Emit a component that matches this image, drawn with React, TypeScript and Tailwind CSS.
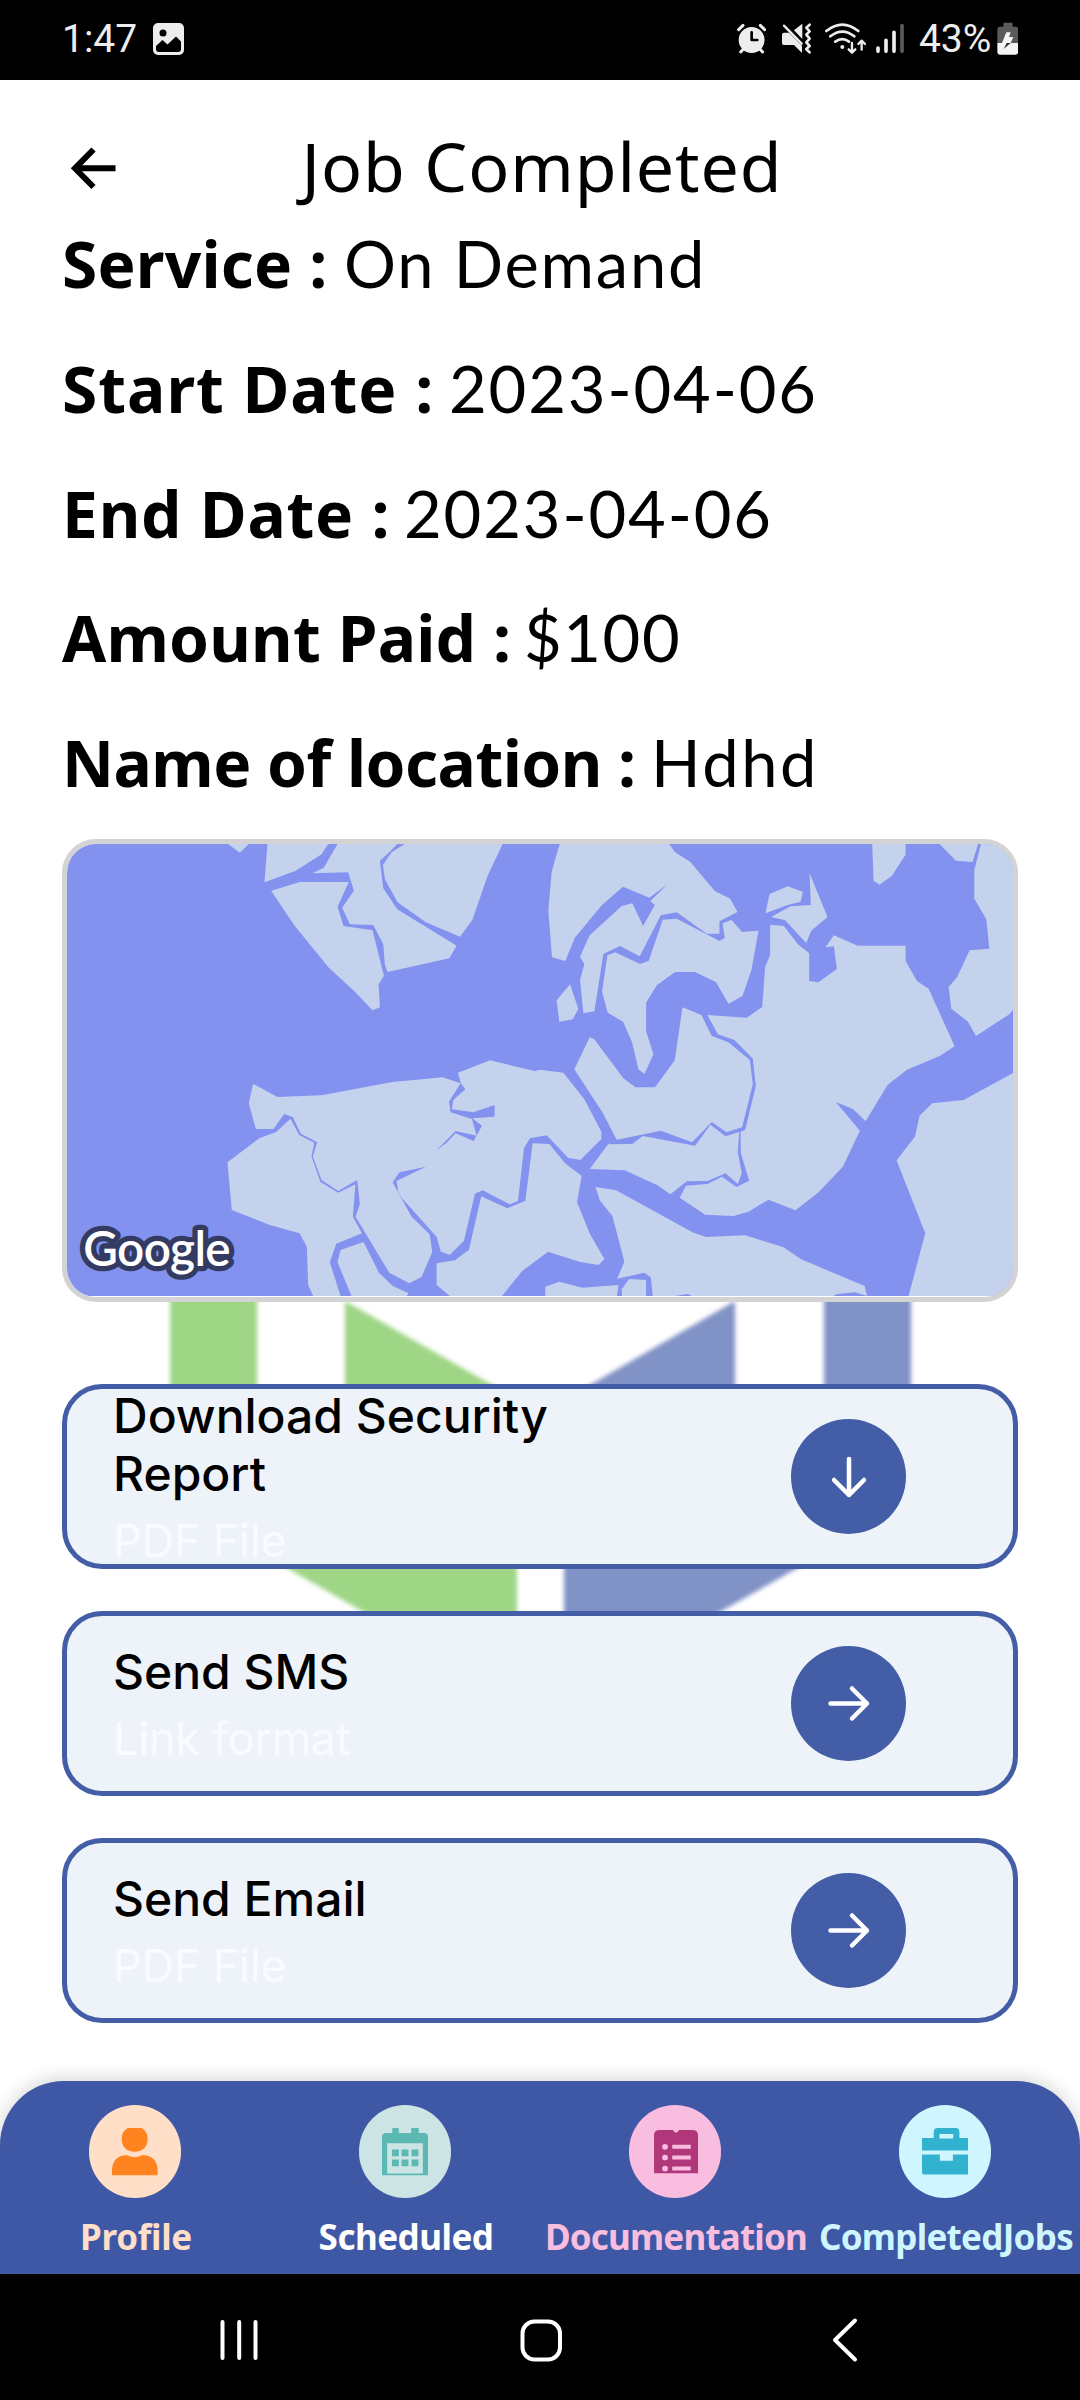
import type { ReactNode } from "react";

const details = [
  { label: "Service :", value: "On Demand", labelClass: "w-[282px] tracking-[0.2px]", valueClass: "tracking-[1.8px]" },
  { label: "Start Date :", value: "2023-04-06", labelClass: "w-[387px] tracking-[1px]", valueClass: "tracking-[1.9px]" },
  { label: "End Date :", value: "2023-04-06", labelClass: "w-[342px] tracking-[0.8px]", valueClass: "tracking-[1.9px]" },
  { label: "Amount Paid :", value: "$100", labelClass: "w-[462px] tracking-[0.2px]", valueClass: "tracking-[1.6px]" },
  { label: "Name of location :", value: "Hdhd", labelClass: "w-[589px] tracking-[-0.5px]", valueClass: "tracking-[2.6px]" },
];

function StatusBar() {
  return (
    <div className="flex h-20 shrink-0 items-center bg-black pl-[62px] pr-[61.7px] font-['Roboto',sans-serif] text-[39px] leading-[60px] text-[#ededed]">
      <span className="-mt-0.5">1:47</span>
      <svg className="-mt-0.5 ml-4 h-8 w-8" viewBox="0 0 32 32">
        <path
          fillRule="evenodd"
          fill="#ededed"
          d="M5 0h21a5 5 0 0 1 5 5v22a5 5 0 0 1-5 5H5a5 5 0 0 1-5-5V5a5 5 0 0 1 5-5ZM10 6.500a3.500 3.500 0 1 0 0 7a3.500 3.500 0 0 0 0-7ZM3 23v3q0 3 3 3h19q3 0 3-3v-7.500l-5-5l-8.500 8L9.500 17Z"
        />
      </svg>
      <div className="ml-auto flex items-center">
        <svg className="h-[60px] w-[29.3px]" viewBox="50 0 88 180">
          <circle cx="94" cy="90" r="39" fill="#ededed" />
          <path d="M55 59L68 46M120 46L133 59M70 116L61 126M118 116L127 126" stroke="#ededed" strokeWidth="9" strokeLinecap="round" />
          <path d="M94 67V90H111" fill="none" stroke="#000" strokeWidth="8" strokeLinecap="round" strokeLinejoin="round" />
        </svg>
        <svg className="ml-[16.300px] h-[60px] w-[29.300px]" viewBox="187 0 88 180">
          <path d="M187 74q0-6 6-6h15l39 39v22l-24-24h-30q-6 0-6-6Z" fill="#ededed" />
          <path d="M223 61L248 41V87Z" fill="#ededed" />
          <path d="M193 47L246 101" stroke="#ededed" strokeWidth="7" strokeLinecap="round" />
          <path d="M270 44L260 53L270 64L260 74L270 86L260 97L270 108L260 117L270 127" fill="none" stroke="#ededed" strokeWidth="8" strokeLinecap="round" strokeLinejoin="round" />
        </svg>
        <svg className="ml-[13.700px] h-[60px] w-[41.300px]" viewBox="316 0 124 180">
          <g fill="none" stroke="#ededed" strokeWidth="8" strokeLinecap="round" strokeLinejoin="round">
            <path d="M320 63Q368 24 416 63M332 79Q368 50 404 79M347 95Q368 80 388 95" />
            <path strokeWidth="7" d="M397 99V127M387 118L397 128L407 118M426 119V93M416 102L426 92L436 102" />
          </g>
          <circle cx="368" cy="111" r="6" fill="#ededed" />
        </svg>
        <svg className="ml-[9.300px] h-[60px] w-7" viewBox="468 0 84 180">
          <g strokeWidth="11" strokeLinecap="round" stroke="#ededed">
            <path d="M474 114V124M498 91V124M522 67V124" />
            <path d="M546 47V124" stroke="#5a5a5a" />
          </g>
        </svg>
        <span className="-mt-0.5 ml-[15px] w-[77.700px]">43%</span>
        <svg className="h-[60px] w-[21.700px]" viewBox="830 0 65 180">
          <path d="M849 42q0-4 4-4h20q4 0 4 4v8h8q9 0 9 9v40h-63V59q0-9 9-9h9Z" fill="#5a5a5a" />
          <path d="M831 99h63v26q0 9-9 9h-45q-9 0-9-9Z" fill="#f5f5f5" />
          <path d="M858 67H871L866 81H879L871 99H845Z" fill="#f5f5f5" />
          <path d="M859 99H871L850 117Z" fill="#333" />
        </svg>
      </div>
    </div>
  );
}

const leftLand = [
  "565,72 600,98 627,72",
  "683,72 674,187 768,152 845,103 865,72",
  "893,72 852,143 818,160 925,157 942,212 907,263 930,313 1000,315 1030,372 1035,435 1043,456 1228,415 1250,377 1072,268 1030,205 1020,122 1050,95 1072,72",
  "1095,72 1055,97 1029,135 1035,178 1073,247 1158,307 1260,350 1297,300 1343,167 1388,72",
  "694,212 780,186 927,186 893,260 911,318 998,331 1032,467 1016,493 1020,562 998,571 942,512 867,443 765,318",
  "640,791 713,831 845,826 1058,786 1208,772 1262,790 1227,845 1232,877 1296,897 1310,947 1247,933 1188,992 1220,968 1247,940 1301,963 1326,917 1297,895 1364,890 1364,855 1300,877 1236,868 1240,840 1276,808 1263,790 1254,758 1350,721 1484,753 1500,749 1570,758 1633,838 1684,935 1684,957 1621,1020 1585,1014 1520,946 1470,955 1452,985 1434,1143 1409,1153 1328,1111 1305,1121 1272,1262 1230,1304 1203,1295 1190,1250 1085,1133 1075,1115 1070,1083 1158,1040 1079,1057 1058,1087 1115,1190 1169,1243 1177,1296 1145,1371 1108,1390 1048,1358 947,1190 960,1152 952,1080 895,1113 845,1080 819,1010 832,967 783,941 759,891 733,882 701,927 648,927 627,850",
  "752,896 778,945 823,968 815,1010 842,1086 895,1118 947,1093 939,1190 966,1240 889,1271 870,1327 902,1428 820,1428 805,1395 801,1280 779,1240 690,1215 576,1170 563,1027 660,954 709,936",
  "971,1266 1017,1358 1059,1398 1106,1420 1100,1428 935,1428 893,1327 902,1290",
  "1190,1330 1245,1321 1287,1289 1324,1129 1402,1165 1456,1142 1478,970 1528,972 1575,1030 1625,1068 1611,1147 1650,1243 1693,1317 1676,1335 1621,1326 1524,1295 1446,1354 1386,1428 1230,1428 1190,1395",
];

const rightLand = [
  "59,72 35,155 25,272 36,412 76,423 104,354 185,256 249,200 328,233 383,192 331,243 344,255 309,318 277,250 245,258 149,346 120,410 133,432 120,480 130,580 163,574 190,402 240,378 299,409 362,286 410,277 500,341 538,341 538,304 592,276 570,236 524,213 450,125 405,97 387,72",
  "202,406 225,397 300,432 326,422 368,299 410,296 538,363 554,354 547,310 574,300 606,336 655,332 634,450 607,528 565,551 528,487 465,456 405,456 350,496 318,548 318,633 340,703 313,762 295,748 276,667 249,605 203,578 186,515",
  "90,493 115,567 98,598 58,605 50,541",
  "688,222 743,199 788,216 781,245 740,256 676,280",
  "693,291 751,259 812,255 808,160 862,291 813,332 798,369 735,301",
  "690,314 731,318 773,373 807,400 807,483 835,487 890,447 881,379 856,382 881,346 952,377 1096,377 1096,423 1130,483 1165,506 1243,679 1198,708 1100,749 1042,795 976,904 938,867 887,846 959,932 908,1040 835,1117 766,1171 685,1139 625,1175 580,1188 495,1184 419,1133 437,1097 502,1092 545,1070 589,1101 627,1082 602,998 601,935 615,930 647,797 638,716 583,660 533,643 502,585 620,593 666,561 675,440 690,405",
  "149,652 162,657 250,775 286,802 345,802 404,721 427,562 484,585 515,648 565,667 629,720 638,792 606,922 559,937 515,906 456,967 363,932 230,959 188,878 103,748",
  "204,973 277,972 308,948 465,977 511,914 556,949 597,936 593,998 605,1060 593,1092 556,1060 502,1083 440,1084 391,1123 352,1096 254,1051 149,1047",
  "996,72 1000,182 1018,194 1055,167 1096,104 1096,72",
  "1198,72 1247,122 1297,126 1313,72",
  "1322,72 1302,150 1302,236 1338,298 1347,386 1288,391 1251,470 1225,501 1233,566 1283,605 1307,648 1405,584 1425,562 1425,72",
  "1425,755 1270,840 1176,850 1138,887 1124,950 1069,1021 1155,1240 1105,1428 1425,1428",
  "166,1101 228,1111 460,1238 499,1251 615,1246 730,1282 783,1318 973,1398 980,1428 945,1417 890,1422 880,1428 455,1428 443,1422 405,1428 338,1428 332,1372 313,1358 231,1376 253,1325 217,1188 180,1142",
  "16,1400 58,1385 127,1403 235,1395 231,1428 16,1428",
  "267,1377 318,1380 318,1428 246,1428 245,1408",
];

function MapPreview() {
  return (
    <div className="relative h-[463px] shrink-0 overflow-hidden rounded-[34px] border-5 border-[#d3d3d3] bg-white">
      <svg className="block h-[452px] w-full" viewBox="82 72 2836 1356" preserveAspectRatio="none">
        <rect x="82" y="72" width="2836" height="1356" fill="#8392ef" />
        <g fill="#c5d2ee">
          {leftLand.map((points) => (
            <polygon key={points} points={points} />
          ))}
          <g transform="translate(1500 0)">
            {rightLand.map((points) => (
              <polygon key={points} points={points} />
            ))}
          </g>
        </g>
        <text
          x="131"
          y="1337"
          fontSize="143"
          letterSpacing="-2"
          fill="#fff"
          stroke="#343b63"
          strokeWidth="32"
          strokeLinejoin="round"
          paintOrder="stroke"
          className="font-['Lato',sans-serif] font-semibold"
        >
          Google
        </text>
      </svg>
    </div>
  );
}

function Watermark() {
  return (
    <svg className="absolute left-0 top-[1200px] h-[420px] w-[1080px] blur-[2px]" viewBox="0 1200 1080 420">
      <g fill="#9ed686">
        <path d="M170 1200H257V1430L517 1540V1700L170 1501Z" />
        <path d="M345 1301L517 1399V1500L345 1400Z" />
      </g>
      <g fill="#8192c6">
        <path d="M911 1200H824V1430L564 1540V1700L911 1504Z" />
        <path d="M735 1301L564 1400V1500L735 1400Z" />
      </g>
    </svg>
  );
}

function ActionCard({ title, subtitle, direction }: { title: string; subtitle: string; direction: "down" | "right" }) {
  return (
    <div className="relative flex h-[185px] shrink-0 items-center justify-between rounded-[40px] border-5 border-[#435da7] bg-[#eef3fa] pl-[46px] pr-[107px] font-['Inter',sans-serif]">
      <div className="w-[450px] pt-0.5">
        <div className="text-5xl/[58px] font-medium text-black">{title}</div>
        <div className="mt-[11px] text-[45px] leading-[54px] tracking-[-0.2px] text-[#f9fbff]">{subtitle}</div>
      </div>
      <div className="flex h-[115px] w-[115px] items-center justify-center rounded-full bg-[#435da7]">
        <svg className="h-12 w-12" viewBox="0 0 48 48" fill="none" stroke="#fff" strokeWidth="4.500" strokeLinecap="round" strokeLinejoin="round">
          {direction === "down" ? <path d="M24 6V42M9 27L24 42L39 27" /> : <path d="M5.500 23.500H42M27 8.500L42 23.500L27 38.500" />}
        </svg>
      </div>
    </div>
  );
}

function TabItem({ label, labelClass, circleClass, children }: { label: string; labelClass: string; circleClass: string; children: ReactNode }) {
  return (
    <div className="flex flex-col items-center pt-6">
      <div className={`h-[93px] w-[92px] rounded-full ${circleClass}`}>
        <svg className="block h-full w-full" viewBox="258 135 268 278" preserveAspectRatio="none">
          {children}
        </svg>
      </div>
      <div className={`mt-[17px] whitespace-nowrap pl-0.5 text-[35px] font-bold leading-[44px] ${labelClass}`}>{label}</div>
    </div>
  );
}

function TabBar() {
  return (
    <nav className="relative mt-auto grid h-[193px] shrink-0 grid-cols-4 rounded-t-[64px] bg-[#3f58a6] font-['Noto_Sans',sans-serif] shadow-[0_-3px_18px_rgba(0,0,0,0.16)]">
      <TabItem label="Profile" labelClass="text-[#ffdfc8] tracking-[-0.3px]" circleClass="bg-[#ffdfc8]">
        <path fill="#ff841f" d="M371 204H411Q429 214 429 238Q427 272 391 275Q355 272 353 238Q353 214 371 204ZM360 285H370Q391 297 412 285H422Q458 292 458 332V345H325V332Q325 292 360 285Z" />
      </TabItem>
      <TabItem label="Scheduled" labelClass="text-white tracking-[-0.5px]" circleClass="bg-[#cce4e3]">
        <path fill="#5cb8b2" fillRule="evenodd" d="M355 204H374V219H410V204H432V219H448Q459 219 459 230V345H325V230Q325 219 337 219H355ZM340 249V340H444V249Z" />
        <path fill="#5cb8b2" d="M354 268h20v20h-20zM382 268h20v20h-20zM411 268h20v20h-20zM354 298h20v20h-20zM382 298h20v20h-20zM411 298h20v20h-20z" />
      </TabItem>
      <TabItem label="Documentation" labelClass="text-[#f9bddf] tracking-[-0.8px]" circleClass="bg-[#f9bddf]">
        <path fill="#b03779" d="M331 225Q331 210 348 210H386Q395 226 404 210H442Q459 210 459 225V339H331Z" />
        <g fill="#f9bddf">
          <circle cx="363" cy="260" r="8.500" />
          <circle cx="363" cy="292" r="8.500" />
          <circle cx="363" cy="325" r="8.500" />
          <path d="M384 254h54v12h-54zM384 286h54v12h-54zM384 319h54v12h-54z" />
        </g>
      </TabItem>
      <TabItem label="CompletedJobs" labelClass="text-[#cff6ff] tracking-[-0.7px]" circleClass="bg-[#cff6ff]">
        <path fill="#31b2cf" fillRule="evenodd" d="M359 234V216Q359 204 371 204H423Q434 204 434 216V234H459V271H325V234ZM376 222V235H416V222ZM325 283H377V302H415V283H459V343H333Q325 343 325 335Z" />
      </TabItem>
    </nav>
  );
}

function SystemNav() {
  return (
    <div className="flex h-[126px] shrink-0 items-center gap-[254px] bg-black pl-[215.400px] pt-[5px]">
      <svg className="h-12 w-12" viewBox="0 0 48 48" stroke="#fff" strokeWidth="4" strokeLinecap="round">
        <path d="M7.500 6V42M24.200 6V42M40.500 6V42" />
      </svg>
      <svg className="h-12 w-12" viewBox="0 0 48 48" fill="none" stroke="#fff" strokeWidth="4">
        <rect x="5.500" y="5.500" width="37.500" height="38" rx="12" />
      </svg>
      <svg className="h-12 w-12" viewBox="0 0 48 48" fill="none" stroke="#fff" strokeWidth="4" strokeLinecap="round" strokeLinejoin="round">
        <path d="M36 4.500L16 24L36 43.500" />
      </svg>
    </div>
  );
}

export default function App() {
  return (
    <div className="relative flex h-[2400px] w-[1080px] flex-col overflow-hidden bg-white text-black">
      <Watermark />
      <StatusBar />
      <header className="relative flex h-[138px] shrink-0 items-center justify-center pl-1 pt-[34px]">
        <svg className="absolute left-[69px] top-[64px] h-12 w-12" viewBox="0 0 48 48" fill="none" stroke="#000" strokeWidth="6">
          <path d="M6 24.300H46.500M24.500 5.500L6 24.300L24.500 43" />
        </svg>
        <h1 className="font-['Noto_Sans',sans-serif] text-[68px] leading-[80px] tracking-[0.9px]">Job Completed</h1>
      </header>
      <section className="h-[621px] shrink-0 pl-[62px] pt-0.5">
        {details.map((item) => (
          <div key={item.label} className="flex h-[124.800px] items-baseline whitespace-nowrap text-[64px] leading-[88px]">
            <span className={`font-['Noto_Sans',sans-serif] font-bold ${item.labelClass}`}>{item.label}</span>
            <span className={`font-['Lato',sans-serif] text-[65px] leading-[80px] ${item.valueClass}`}>{item.value}</span>
          </div>
        ))}
      </section>
      <div className="flex flex-col px-[62px]">
        <MapPreview />
        <div className="mt-[82px] flex flex-col gap-[42px]">
          <ActionCard title="Download Security Report" subtitle="PDF File" direction="down" />
          <ActionCard title="Send SMS" subtitle="Link format" direction="right" />
          <ActionCard title="Send Email" subtitle="PDF File" direction="right" />
        </div>
      </div>
      <TabBar />
      <SystemNav />
    </div>
  );
}
